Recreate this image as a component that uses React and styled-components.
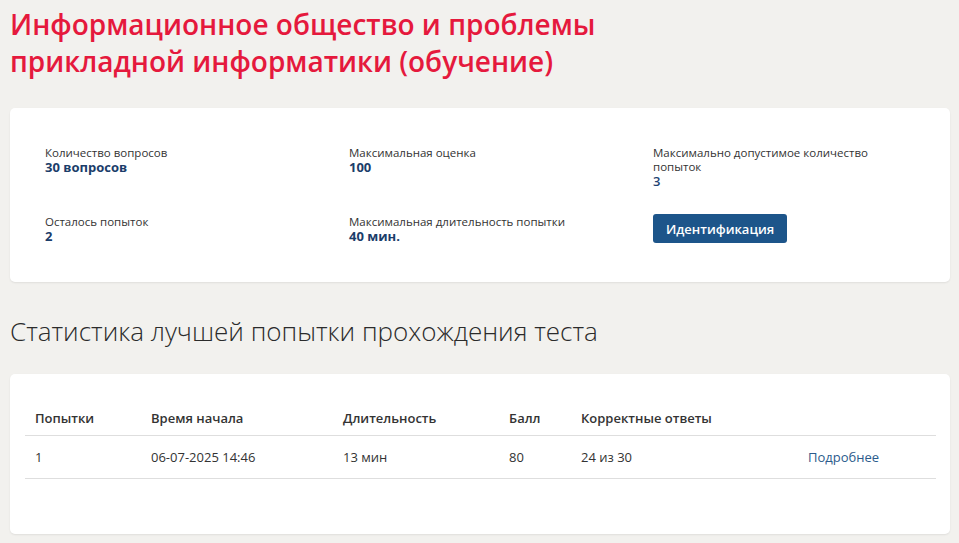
import React from 'react';
import styled, { createGlobalStyle } from 'styled-components';

const GlobalStyle = createGlobalStyle`
	html, body {
		margin: 0;
		padding: 0;
		background: #f2f1ee;
		font-family: 'Open Sans', 'Noto Sans', sans-serif;
		color: #333;
	}
`;

const Page = styled.div`
	padding: 6px 9px 9px 10px;
	width: 959px;
	box-sizing: border-box;
`;

const Title = styled.h1`
	margin: 0;
	font-size: 28px;
	line-height: 37px;
	font-weight: 600;
	color: #e5193d;
`;

const Card = styled.div`
	background: #fff;
	border-radius: 5px;
	box-shadow: 0 1px 2px rgba(0, 0, 0, 0.08);
	margin-top: ${(p) => p.$top}px;
	padding: ${(p) => p.$pad};
`;

const InfoGrid = styled.div`
	display: grid;
	grid-template-columns: repeat(3, 304px);
	row-gap: 27px;
`;

const Info = styled.div`
	display: flex;
	flex-direction: column;
	width: 230px;
`;

const Label = styled.span`
	font-size: 11.5px;
	line-height: 14px;
	color: #333;
`;

const Value = styled.span`
	font-size: 13px;
	line-height: 14px;
	color: ${(p) => (p.$light ? '#1d4472' : '#1b3d6a')};
	font-weight: ${(p) => (p.$light ? 600 : 700)};
`;

const Button = styled.button`
	align-self: flex-start;
	margin-top: -1px;
	height: 29px;
	padding: 0 13px;
	border: none;
	border-radius: 3px;
	background: #1d558a;
	color: #fff;
	font-family: inherit;
	font-size: 13px;
	font-weight: 600;
	cursor: pointer;
`;

const Subtitle = styled.h2`
	margin: 33px 0 0;
	font-size: 26px;
	line-height: 32px;
	font-weight: 300;
	color: #2b2b2b;
`;

const Table = styled.table`
	width: 100%;
	table-layout: fixed;
	border-collapse: collapse;
	font-size: 13px;
	color: #333;
`;

const Th = styled.th`
	text-align: left;
	font-weight: 600;
	padding: 0 10px;
	height: 35px;
	vertical-align: middle;
	border-bottom: 1px solid #dedede;
`;

const Td = styled.td`
	padding: 0 10px;
	height: 42px;
	border-bottom: 1px solid #dedede;
`;

const Link = styled.a`
	color: #2b5b8c;
	text-decoration: none;
`;

const info = [
	{ label: 'Количество вопросов', value: '30 вопросов' },
	{ label: 'Максимальная оценка', value: '100' },
	{ label: 'Максимально допустимое количество попыток', value: '3', light: true },
	{ label: 'Осталось попыток', value: '2' },
	{ label: 'Максимальная длительность попытки', value: '40 мин.' },
];

const columns = [116, 192, 166, 72, 227, 138];

export default function App() {
	return (
		<Page>
			<GlobalStyle />
			<Title>
				Информационное общество и проблемы
				<br />
				прикладной информатики (обучение)
			</Title>
			<Card $top={28} $pad="38px 0 39px 35px">
				<InfoGrid>
					{info.map((item) => (
						<Info key={item.label}>
							<Label>{item.label}</Label>
							<Value $light={item.light}>{item.value}</Value>
						</Info>
					))}
					<Info>
						<Button>Идентификация</Button>
					</Info>
				</InfoGrid>
			</Card>
			<Subtitle>Статистика лучшей попытки прохождения теста</Subtitle>
			<Card $top={27} $pad="26px 14px 55px 15px">
				<Table>
					<colgroup>
						{columns.map((w, i) => (
							<col key={i} style={{ width: w }} />
						))}
					</colgroup>
					<thead>
						<tr>
							<Th>Попытки</Th>
							<Th>Время начала</Th>
							<Th>Длительность</Th>
							<Th>Балл</Th>
							<Th>Корректные ответы</Th>
							<Th />
						</tr>
					</thead>
					<tbody>
						<tr>
							<Td>1</Td>
							<Td>06-07-2025 14:46</Td>
							<Td>13 мин</Td>
							<Td>80</Td>
							<Td>24 из 30</Td>
							<Td>
								<Link href="#">Подробнее</Link>
							</Td>
						</tr>
					</tbody>
				</Table>
			</Card>
		</Page>
	);
}
